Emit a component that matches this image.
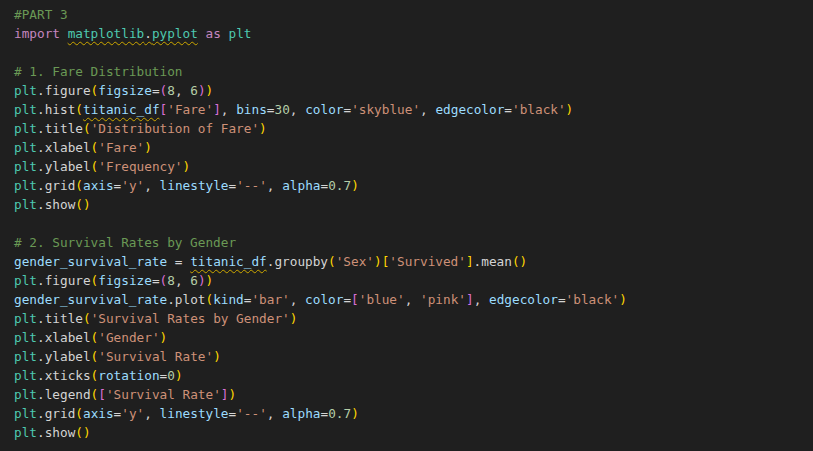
import React from "react";

const LINES: string[] = [
  "#PART 3",
  "import matplotlib.pyplot as plt",
  "",
  "# 1. Fare Distribution",
  "plt.figure(figsize=(8, 6))",
  "plt.hist(titanic_df['Fare'], bins=30, color='skyblue', edgecolor='black')",
  "plt.title('Distribution of Fare')",
  "plt.xlabel('Fare')",
  "plt.ylabel('Frequency')",
  "plt.grid(axis='y', linestyle='--', alpha=0.7)",
  "plt.show()",
  "",
  "# 2. Survival Rates by Gender",
  "gender_survival_rate = titanic_df.groupby('Sex')['Survived'].mean()",
  "plt.figure(figsize=(8, 6))",
  "gender_survival_rate.plot(kind='bar', color=['blue', 'pink'], edgecolor='black')",
  "plt.title('Survival Rates by Gender')",
  "plt.xlabel('Gender')",
  "plt.ylabel('Survival Rate')",
  "plt.xticks(rotation=0)",
  "plt.legend(['Survival Rate'])",
  "plt.grid(axis='y', linestyle='--', alpha=0.7)",
  "plt.show()",
];

const C = {
  comment: "text-[#6a9955]",
  kw: "text-[#c586c0]",
  cls: "text-[#4ec9b0]",
  variable: "text-[#9cdcfe]",
  plain: "text-[#d4d4d4]",
  str: "text-[#ce9178]",
  num: "text-[#b5cea8]",
};
const BR = ["text-[#ffd700]", "text-[#da70d6]", "text-[#179fff]"];
const SQUIGGLE =
  "underline decoration-wavy decoration-[#cca700] decoration-1 underline-offset-[3px]";

type Tok = { t: string; c: string; sq?: boolean };

function tokenize(line: string): Tok[] {
  const out: Tok[] = [];
  const re = /(#.*$)|('[^']*')|(\d+(?:\.\d+)?)|([A-Za-z_]\w*)|([()\[\]])|(\s+)|(.)/g;
  let m: RegExpExecArray | null;
  let depth = 0;
  while ((m = re.exec(line))) {
    const s = m[0];
    const idx = m.index;
    if (m[1]) out.push({ t: s, c: C.comment });
    else if (m[2]) out.push({ t: s, c: C.str });
    else if (m[3]) out.push({ t: s, c: C.num });
    else if (m[4]) {
      const prev = line.slice(0, idx).trimEnd().slice(-1);
      const next = line.slice(idx + s.length).trimStart().charAt(0);
      let c = C.variable;
      if (s === "import" || s === "as") c = C.kw;
      else if (s === "plt" || s === "matplotlib" || s === "pyplot") c = C.cls;
      else if (prev === ".") c = C.plain;
      else if (next === "(") c = C.plain;
      out.push({ t: s, c, sq: s === "titanic_df" });
    } else if (m[5]) {
      if (s === "(" || s === "[") {
        out.push({ t: s, c: BR[depth % 3] });
        depth++;
      } else {
        depth = Math.max(0, depth - 1);
        out.push({ t: s, c: BR[depth % 3] });
      }
    } else out.push({ t: s, c: C.plain });
  }
  return out;
}

function Line({ text }: { text: string }) {
  if (text === "import matplotlib.pyplot as plt") {
    return (
      <div className="h-[19px] whitespace-pre">
        <span className={C.kw}>import</span>
        <span> </span>
        <span className={SQUIGGLE}>
          <span className={C.cls}>matplotlib</span>
          <span className={C.plain}>.</span>
          <span className={C.cls}>pyplot</span>
        </span>
        <span> </span>
        <span className={C.kw}>as</span>
        <span> </span>
        <span className={C.cls}>plt</span>
      </div>
    );
  }
  const toks = tokenize(text);
  return (
    <div className="h-[19px] whitespace-pre">
      {toks.length === 0 ? " " : null}
      {toks.map((k, i) => (
        <span key={i} className={k.sq ? `${k.c} ${SQUIGGLE}` : k.c}>
          {k.t}
        </span>
      ))}
    </div>
  );
}

export default function App() {
  return (
    <div className="w-[813px] h-[451px] overflow-hidden bg-[#1f1f1f] pl-[14px] pt-[5px] font-['DejaVu_Sans_Mono',monospace] text-[12.72px] leading-[19px] text-[#d4d4d4]">
      {LINES.map((l, i) => (
        <Line key={i} text={l} />
      ))}
    </div>
  );
}
